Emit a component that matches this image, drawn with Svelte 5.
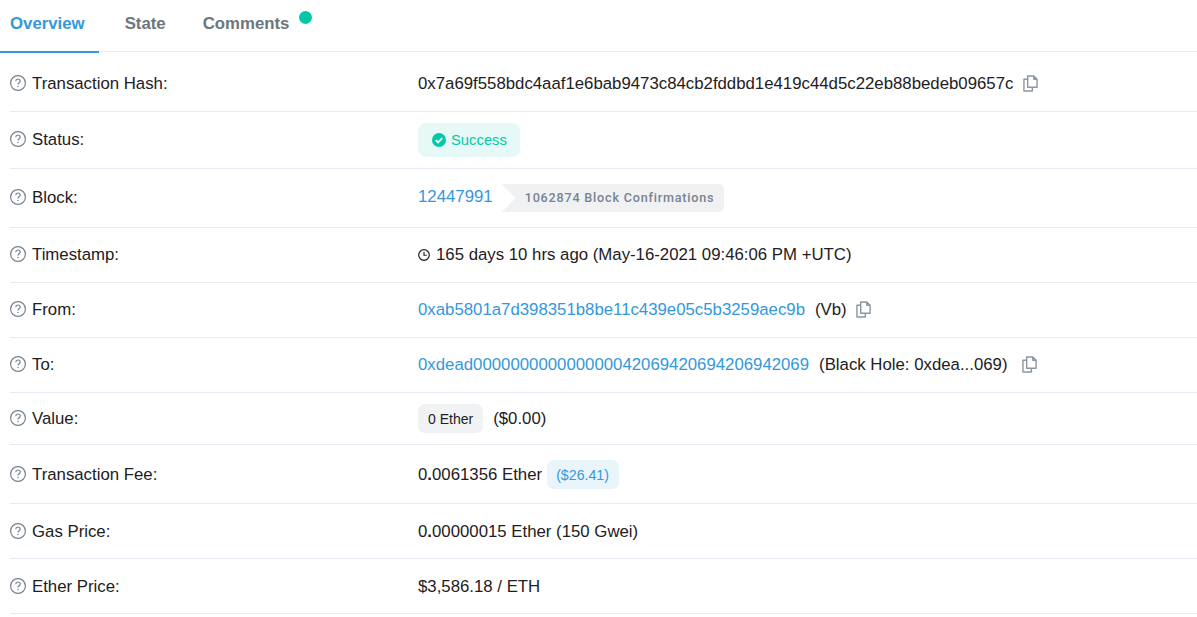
<script>
  const helpIcon = "M8 .6a7.4 7.4 0 1 0 0 14.8A7.4 7.4 0 0 0 8 .6z";
</script>

{#snippet label(text)}
  <div class="label">
    <svg class="help" viewBox="0 0 16 16" width="16" height="16" aria-hidden="true">
      <path d={helpIcon} fill="none" stroke="#77838f" stroke-width="1.2" />
      <path d="M5.8 6.2c0-1.3 1-2.2 2.2-2.2s2.2.9 2.2 2c0 1.8-2.2 1.7-2.2 3.5" fill="none" stroke="#77838f" stroke-width="1.2" />
      <circle cx="8" cy="11.6" r=".75" fill="#77838f" />
    </svg>
    <span>{text}</span>
  </div>
{/snippet}

{#snippet copy()}
  <svg class="copy" viewBox="0 0 16 18" width="15" height="17" aria-hidden="true">
    <path d="M5 1h6.5L15 4.5V13H5z M11.5 1v3.5H15" fill="none" stroke="#8a96a3" stroke-width="1.5" stroke-linejoin="round" />
    <path d="M5 4.5H1V17h9v-4" fill="none" stroke="#8a96a3" stroke-width="1.5" stroke-linejoin="round" />
  </svg>
{/snippet}

<div class="page">
  <nav class="tabs">
    <span class="tab active">Overview</span>
    <span class="tab state">State</span>
    <span class="tab">Comments<i class="dot"></i></span>
  </nav>

  <section class="rows">
    <div class="row hash">
      {@render label("Transaction Hash:")}
      <div class="value">0x7a69f558bdc4aaf1e6bab9473c84cb2fddbd1e419c44d5c22eb88bedeb09657c<span class="copy-gap">{@render copy()}</span></div>
    </div>

    <div class="row status">
      {@render label("Status:")}
      <div class="value">
        <span class="success">
          <svg viewBox="0 0 16 16" width="14" height="14" aria-hidden="true">
            <circle cx="8" cy="8" r="8" fill="#00c9a7" />
            <path d="M4.3 8.2l2.6 2.6 4.8-5" fill="none" stroke="#fff" stroke-width="2" />
          </svg>
          Success
        </span>
      </div>
    </div>

    <div class="row block">
      {@render label("Block:")}
      <div class="value">
        <a href="#block" class="link block-link">12447991</a>
        <span class="confirm">1062874 Block Confirmations</span>
      </div>
    </div>

    <div class="row">
      {@render label("Timestamp:")}
      <div class="value">
        <svg class="clock" viewBox="0 0 12 12" width="12" height="12" aria-hidden="true">
          <circle cx="6" cy="6" r="5.3" fill="none" stroke="#1e2022" stroke-width="1.2" />
          <path d="M6 2.8V6.3H8.8" fill="none" stroke="#1e2022" stroke-width="1.1" />
        </svg>
        <span>165 days 10 hrs ago (May-16-2021 09:46:06 PM +UTC)</span>
      </div>
    </div>

    <div class="row">
      {@render label("From:")}
      <div class="value">
        <a href="#from" class="link">0xab5801a7d398351b8be11c439e05c5b3259aec9b</a>
        <span class="owner">(Vb)</span>
        {@render copy()}
      </div>
    </div>

    <div class="row">
      {@render label("To:")}
      <div class="value">
        <a href="#to" class="link">0xdead000000000000000042069420694206942069</a>
        <span class="owner">(Black Hole: 0xdea...069)</span>
        <span class="copy-gap wide">{@render copy()}</span>
      </div>
    </div>

    <div class="row amount">
      {@render label("Value:")}
      <div class="value">
        <span class="ether">0 Ether</span>
        <span class="usd">($0.00)</span>
      </div>
    </div>

    <div class="row fee">
      {@render label("Transaction Fee:")}
      <div class="value">
        <span>0<b>.</b>0061356 Ether</span>
        <span class="fee-usd">($26.41)</span>
      </div>
    </div>

    <div class="row low">
      {@render label("Gas Price:")}
      <div class="value"><span>0<b>.</b>00000015 Ether (150 Gwei)</span></div>
    </div>

    <div class="row low">
      {@render label("Ether Price:")}
      <div class="value">$3,586.18 / ETH</div>
    </div>
  </section>
</div>

<style>
  :global(body) {
    margin: 0;
    background: #fff;
    overflow: hidden;
  }

  .page {
    width: 1197px;
    font-family: "Liberation Sans", Arial, sans-serif;
    font-size: 16.8px;
    line-height: 24px;
    color: #1e2022;
  }

  .tabs {
    display: flex;
    height: 51px;
    border-bottom: 1px solid #e7eaf3;
    font-weight: 700;
    color: #6c757e;
  }

  .tab {
    position: relative;
    padding: 12px 13px 0;
    margin-right: 13px;
    height: 39px;
  }

  .tab.active {
    padding: 12px 14px 0 10px;
    color: #3498db;
    border-bottom: 2px solid #3498db;
  }

  .tab.state {
    margin-right: 11px;
  }

  .dot {
    position: absolute;
    top: 11px;
    right: -10px;
    width: 13px;
    height: 13px;
    border-radius: 50%;
    background: #00c9a7;
  }

  .rows {
    margin-left: 10px;
  }

  .row {
    display: grid;
    grid-template-columns: 408px 1fr;
    align-items: center;
    padding: 15px 0;
    border-bottom: 1px solid #e7eaf3;
  }

  .row.hash {
    padding: 20px 0 15px;
  }

  .row.status {
    padding: 11px 0;
  }

  .row.amount {
    padding: 11px 0;
  }

  .row.fee {
    padding: 15px 0 14px;
  }

  .row.low {
    padding: 16px 0 14px;
  }

  .label {
    display: flex;
    align-items: center;
    gap: 6px;
  }

  .help {
    flex: none;
    margin-bottom: 2px;
  }

  .value {
    display: flex;
    align-items: center;
  }

  .link {
    color: #3498db;
    text-decoration: none;
  }

  .block-link {
    margin-bottom: 2px;
  }

  .copy {
    display: block;
    margin-left: 9px;
    margin-bottom: 2px;
  }

  .copy-gap {
    margin-left: 1px;
  }

  .copy-gap.wide {
    margin-left: 6px;
  }

  .owner {
    margin-left: 10px;
  }

  .success {
    display: inline-flex;
    align-items: center;
    gap: 5px;
    height: 34px;
    padding: 0 13px 0 14px;
    border-radius: 8px;
    background: #e6f9f6;
    color: #00c9a7;
    font-size: 14.8px;
  }

  .confirm {
    display: inline-flex;
    align-items: center;
    height: 28px;
    margin-left: 9px;
    padding: 0 10px 0 23px;
    border-radius: 0 5px 5px 0;
    background: #f0f1f3;
    color: #77838f;
    font-family: Roboto, sans-serif;
    font-size: 12.6px;
    font-weight: 500;
    letter-spacing: .8px;
    clip-path: polygon(0 0, 100% 0, 100% 100%, 0 100%, 14px 50%);
  }

  .clock {
    margin-right: 6px;
  }

  .ether {
    display: inline-flex;
    align-items: center;
    height: 29px;
    padding: 0 10px;
    border-radius: 7px;
    background: #f1f2f4;
    font-size: 14px;
    color: #1e2022;
  }

  .usd {
    margin-left: 10px;
  }

  .fee-usd {
    display: inline-flex;
    align-items: center;
    height: 29px;
    margin-left: 5px;
    padding: 0 10px 0 9px;
    border-radius: 7px;
    background: #e9f4fb;
    color: #3498db;
    font-size: 14.2px;
  }
</style>
